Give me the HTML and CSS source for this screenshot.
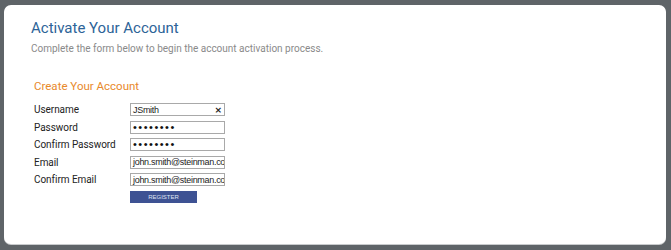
FILE: index.html
```html
<!DOCTYPE html>
<html>
<head>
<meta charset="utf-8">
<link rel="stylesheet" href="styles.css">
</head>
<body>
<div class="panel">
  <h1 class="title">Activate Your Account</h1>
  <p class="subtitle">Complete the form below to begin the account activation process.</p>
  <h2 class="section">Create Your Account</h2>
  <div class="form">
    <label class="label">Username</label>
    <div class="field field-clear"><span class="val">JSmith</span><span class="clear">×</span></div>
    <label class="label">Password</label>
    <div class="field"><span class="dots">••••••••</span></div>
    <label class="label">Confirm Password</label>
    <div class="field"><span class="dots">••••••••</span></div>
    <label class="label">Email</label>
    <div class="field"><span class="val">john.smith@steinman.com</span></div>
    <label class="label">Confirm Email</label>
    <div class="field"><span class="val">john.smith@steinman.com</span></div>
    <span></span>
    <button class="btn">REGISTER</button>
  </div>
</div>
</body>
</html>
```
FILE: styles.css
```css
html, body { margin: 0; padding: 0; }
body {
  background: #5f6468;
  width: 671px;
  height: 250px;
  padding: 5px 5px 0 4px;
  box-sizing: border-box;
  font-family: Roboto, sans-serif;
}
.panel {
  background: #fff;
  border-radius: 7px;
  height: 239px;
  padding: 13px 0 0 27px;
  box-sizing: border-box;
  box-shadow: 0 1px 0 #c9cbcd;
}
.title {
  margin: 0;
  font-family: Roboto, sans-serif;
  font-weight: 400;
  font-size: 15px;
  line-height: 20px;
  color: #2d6498;
}
.subtitle {
  margin: 4px 0 0 0;
  font-family: Roboto, sans-serif;
  font-size: 10px;
  line-height: 14px;
  color: #8a8a8a;
}
.section {
  margin: 22px 0 0 3px;
  font-family: Roboto, sans-serif;
  font-weight: 400;
  font-size: 11.5px;
  line-height: 16px;
  color: #e8892b;
}
.form {
  margin: 9px 0 0 3px;
  display: grid;
  grid-template-columns: 96px 95px;
  grid-auto-rows: 13px;
  row-gap: 4.6px;
  align-items: center;
}
.label {
  font-family: Roboto, sans-serif;
  font-size: 10px;
  letter-spacing: -0.05px;
  line-height: 13px;
  color: #222;
}
.field {
  height: 13px;
  border: 1px solid #a9a9a9;
  box-sizing: border-box;
  display: flex;
  align-items: center;
  padding: 0 1px 0 2px;
  overflow: hidden;
  white-space: nowrap;
}
.val {
  font-family: "Liberation Sans", sans-serif;
  font-size: 9px;
  letter-spacing: -0.3px;
  color: #222;
}
.dots {
  font-family: "Liberation Sans", sans-serif;
  font-size: 11px;
  letter-spacing: 1.5px;
  line-height: 11px;
  color: #111;
}
.field-clear { justify-content: space-between; padding-right: 2px; }
.clear {
  font-family: "DejaVu Sans", sans-serif;
  font-weight: bold;
  font-size: 9px;
  line-height: 10px;
  color: #222;
}
.btn {
  align-self: start;
  margin-top: 0;
  width: 67px;
  height: 12px;
  padding: 0;
  border: none;
  background: #3e5293;
  color: #dfe4f2;
  font-family: "Liberation Sans", sans-serif;
  font-size: 6px;
  line-height: 12px;
}
```
